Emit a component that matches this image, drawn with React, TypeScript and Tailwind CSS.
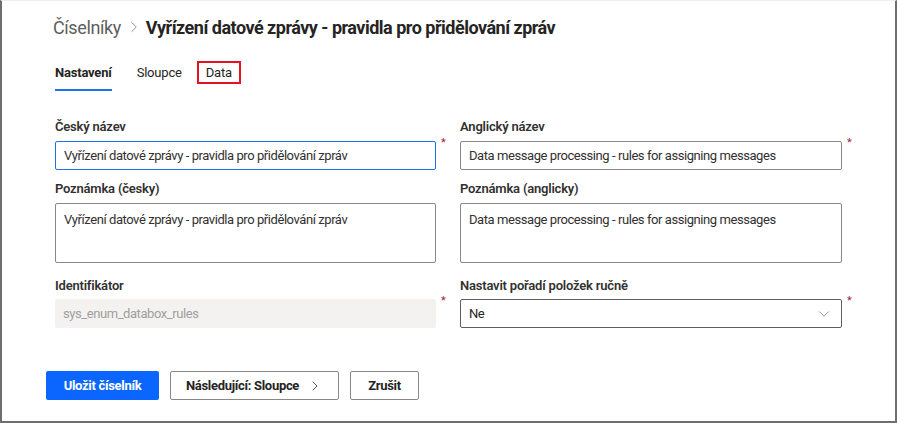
import React from "react";
import { ChevronDown, ChevronRight } from "lucide-react";

const font = { fontFamily: "Roboto, 'Noto Sans', sans-serif" };

const Star = () => (
  <span className="w-[24px] pl-[5px] -mt-[4px] self-start text-[11px] leading-none text-[#a4262c]">
    *
  </span>
);

const Label = ({ children }: { children: React.ReactNode }) => (
  <div className="h-[16px] mb-[6px] text-[13px] leading-[16px] font-semibold text-[#323130] tracking-[-0.2px]">
    {children}
  </div>
);

const field =
  "rounded-[2px] px-[8px] text-[13px] tracking-[-0.43px] text-[#323130]";

export default function App() {
  return (
    <div
      className="w-[897px] h-[423px] bg-white border-l-2 border-r-2 border-b-2 border-[#6e6e6e] border-t border-t-[#f0f0f0] overflow-hidden"
      style={font}
    >
      {/* breadcrumb */}
      <div className="pl-[51px] pt-[13px] flex items-center h-[26px] box-content">
        <span className="text-[18px] text-[#605e5c] tracking-[-0.4px]">Číselníky</span>
        <ChevronRight className="w-[18px] h-[18px] ml-[4px] mr-[3px] text-[#8a8886]" strokeWidth={1.2} />
        <span className="text-[18px] font-bold text-[#252423] tracking-[-0.5px]">
          Vyřízení datové zprávy - pravidla pro přidělování zpráv
        </span>
      </div>

      {/* tabs */}
      <div className="flex items-center pl-[53px] mt-[21px] h-[23px] text-[13px] text-[#252423] tracking-[-0.2px]">
        <div className="relative font-bold">
          Nastavení
          <div className="absolute left-0 right-0 bottom-[-9px] h-[2px] bg-[#1a73e8]" />
        </div>
        <div className="ml-[25px]">Sloupce</div>
        <div className="ml-[15px] h-[23px] px-[7px] flex items-center border-2 border-[#e81123]">
          Data
        </div>
      </div>

      {/* form */}
      <div className="pl-[53px] mt-[35px] grid grid-cols-[405px_406px]">
        <div>
          <Label>Český název</Label>
          <div className="flex">
            <div className={`w-[381px] h-[29px] border border-[#1a73e8] flex items-center ${field}`}>
              Vyřízení datové zprávy - pravidla pro přidělování zpráv
            </div>
            <Star />
          </div>
        </div>
        <div>
          <Label>Anglický název</Label>
          <div className="flex">
            <div className={`w-[382px] h-[29px] border border-[#8a8886] flex items-center ${field}`}>
              Data message processing - rules for assigning messages
            </div>
            <Star />
          </div>
        </div>

        <div className="mt-[11px]">
          <Label>Poznámka (česky)</Label>
          <div className={`w-[381px] h-[60px] border border-[#8a8886] pt-[6px] ${field}`}>
            Vyřízení datové zprávy - pravidla pro přidělování zpráv
          </div>
        </div>
        <div className="mt-[11px]">
          <Label>Poznámka (anglicky)</Label>
          <div className={`w-[382px] h-[60px] border border-[#8a8886] pt-[6px] ${field}`}>
            Data message processing - rules for assigning messages
          </div>
        </div>

        <div className="mt-[15px]">
          <Label>Identifikátor</Label>
          <div className="flex -mt-[1px]">
            <div className={`w-[381px] h-[29px] bg-[#f3f2f1] flex items-center ${field} !text-[#a19f9d]`}>
              sys_enum_databox_rules
            </div>
            <Star />
          </div>
        </div>
        <div className="mt-[15px]">
          <Label>Nastavit pořadí položek ručně</Label>
          <div className="flex -mt-[1px]">
            <div className={`w-[382px] h-[29px] border border-[#605e5c] flex items-center justify-between ${field}`}>
              <span className="text-[#252423]">Ne</span>
              <ChevronDown className="w-[18px] h-[18px] text-[#605e5c]" strokeWidth={0.9} />
            </div>
            <Star />
          </div>
        </div>
      </div>

      {/* actions */}
      <div className="pl-[44px] mt-[43px] flex gap-[11px] text-[13px] font-bold tracking-[-0.3px]">
        <button className="h-[29px] w-[113px] bg-[#0a66ff] text-white rounded-[2px]">
          Uložit číselník
        </button>
        <button className="h-[29px] w-[169px] border border-[#8a8886] rounded-[2px] text-[#252423] flex items-center justify-center">
          Následující: Sloupce
          <ChevronRight className="w-[16px] h-[16px] ml-[8px]" strokeWidth={1.2} />
        </button>
        <button className="h-[29px] w-[69px] border border-[#8a8886] rounded-[2px] text-[#252423]">
          Zrušit
        </button>
      </div>
    </div>
  );
}
